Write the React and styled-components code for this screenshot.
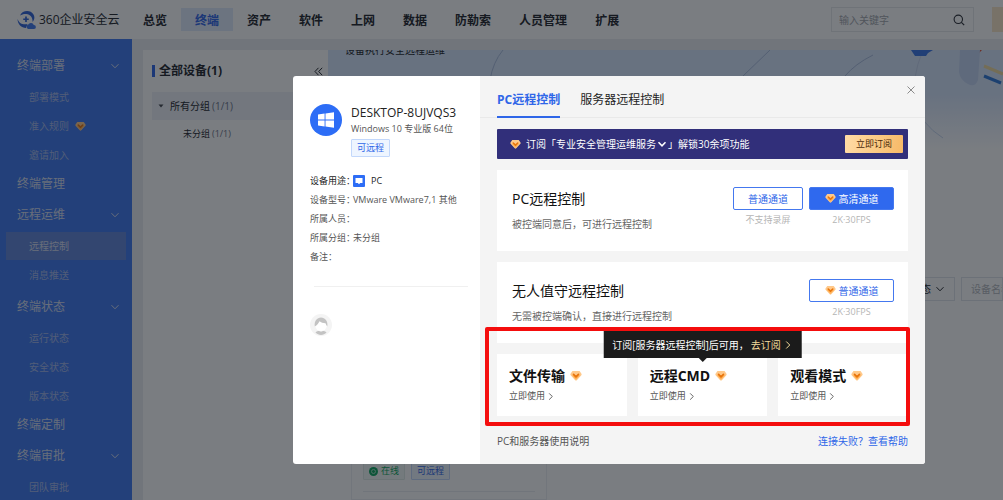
import React from "react";
import styled, { createGlobalStyle, css } from "styled-components";

const GlobalStyle = createGlobalStyle`
  *, *::before, *::after { box-sizing: border-box; }
  body {
    margin: 0;
    font-family: "Open Sans", "Noto Sans CJK SC", sans-serif;
    font-size: 10px;
    line-height: 16px;
    color: #22252b;
    background: #fff;
  }
  button, input, select { font: inherit; color: inherit; margin: 0; }
  button { cursor: pointer; white-space: nowrap; }
  a { text-decoration: none; color: inherit; }
  ul { list-style: none; margin: 0; padding: 0; }
  h2, h3, p, dl, dd, dt { margin: 0; font-weight: 400; }
  svg { display: block; flex: none; }
`;

/* ---------- icons ---------- */

const Gem = ({ size = 11 }) => (
  <svg width={size} height={size} viewBox="0 0 22 22" aria-hidden="true">
    <path d="M5.5 2h11c.7 0 1.300.300 1.700.800L21 7c.6.900.5 1.900-.2 2.700l-8.300 9c-.8.900-2.200.900-3 0l-8.300-9C.5 8.900.4 7.900 1 7l2.800-4.200C4.200 2.300 4.800 2 5.500 2z" fill="#ffc98a" />
    <path d="M3.500 9.500h15l-6.600 7.600c-.5.500-1.300.500-1.800 0z" fill="#ffb056" />
    <path d="M6.500 8l4.500 4.500L15.500 8" fill="none" stroke="#e8750c" strokeWidth="3.200" strokeLinecap="round" strokeLinejoin="round" />
  </svg>
);

const Chevron = ({ dir = "down", size = 10, width = 1 }) => (
  <svg width={size} height={size} viewBox="0 0 10 10" aria-hidden="true">
    <path
      d={dir === "down" ? "M1.500 3.200L5 6.800l3.500-3.600" : "M3.500 1.500L7 5 3.500 8.500"}
      fill="none"
      stroke="currentColor"
      strokeWidth={width}
    />
  </svg>
);

const LogoMark = () => (
  <svg width="20" height="20" viewBox="0 0 40 40" aria-hidden="true">
    <path d="M6 11C11 0 27-1 33 9c3 5 2 11-2 15 1-8-4-15-12-16-5-.6-9 1-13 3z" fill="#2f63d8" />
    <path d="M1 18c4 10 12 12 20 10l-3 8C9 36 1 28 1 18z" fill="#2f63d8" />
    <path d="M18 13v11M12.500 18.500h11" stroke="#2f63d8" strokeWidth="3.400" />
    <path d="M22 38a5 5 0 01.500-9 6 6 0 0111 1 4 4 0 01.500 8z" fill="#3f78ee" />
  </svg>
);

const SearchIcon = () => (
  <svg width="12" height="12" viewBox="0 0 12 12" aria-hidden="true">
    <circle cx="5.300" cy="5.300" r="4.200" fill="none" stroke="#2b2e35" strokeWidth="1.100" />
    <path d="M8.400 8.400l2.800 2.800" stroke="#2b2e35" strokeWidth="1.200" />
  </svg>
);

const WindowsLogo = () => (
  <svg width="32" height="32" viewBox="0 0 32 32" aria-hidden="true">
    <circle cx="16" cy="16" r="16" fill="#2d6df6" />
    <path d="M8 10.400l6.600-.9v6H8zM15.500 9.400L24 8.200v7.300h-8.500zM8 16.400h6.600v6L8 21.500zM15.500 16.400H24v7.400l-8.500-1.200z" fill="#fff" />
  </svg>
);

const PcIcon = () => (
  <svg width="12" height="12" viewBox="0 0 12 12" aria-hidden="true">
    <rect width="12" height="12" rx="1" fill="#2d6df6" />
    <path d="M2.500 3h7v5h-2.300L6 9.300 4.800 8H2.500z" fill="#fff" />
  </svg>
);

const Avatar = () => (
  <svg width="22" height="22" viewBox="0 0 22 22" role="img" aria-label="用户头像">
    <circle cx="11" cy="11" r="11" fill="#f4f4f4" />
    <circle cx="11" cy="11" r="6" fill="#fff" />
    <path d="M4.800 12.500C4 7 7 3.500 11 3.500s7.200 3.500 6.300 9c-.8-1-1.300-2-1.800-3.300-2.500 0-4.500-.6-6-1.900-1 2.200-2.500 4-4.700 5.200z" fill="#c3c3c3" />
    <path d="M5.500 18.500c1.500-1.500 3.500-2 5.500-.800 2-1.200 4-.7 5.500.800-1.500 1.600-3.500 2.500-5.500 2.500s-4-.9-5.500-2.500z" fill="#c3c3c3" />
  </svg>
);

const CloseIcon = () => (
  <svg width="8" height="8" viewBox="0 0 8 8" aria-hidden="true">
    <path d="M.5.500l7 7M7.500.500l-7 7" stroke="#8b8b8b" strokeWidth="1" />
  </svg>
);

const OnlineIcon = () => (
  <svg width="9" height="9" viewBox="0 0 9 9" aria-hidden="true">
    <circle cx="4.500" cy="4.500" r="4.500" fill="#0ea760" />
    <circle cx="4.500" cy="4.500" r="2" fill="none" stroke="#9fdcbc" strokeWidth="1" />
  </svg>
);

/* ---------- page behind the dialog ---------- */

const Page = styled.div`
  display: flex;
  flex-direction: column;
  height: 100vh;
  overflow: hidden;
  background: #ecedf1;
`;

const TopBar = styled.header`
  display: flex;
  align-items: center;
  flex: none;
  height: 39px;
  padding-left: 17px;
  background: #fff;
`;

const Brand = styled.a`
  display: flex;
  align-items: center;
  gap: 2px;
  flex: none;
  width: 112px;
  font-size: 12px;
  white-space: nowrap;
`;

const Nav = styled.nav`
  display: flex;
  justify-content: space-between;
  flex: 0 1 496px;
`;

const NavLink = styled.a`
  padding: 5px 14px 2px;
  font-size: 12px;
  font-weight: 700;
  white-space: nowrap;
  ${(p) => p.$active && css`
    color: #2f66e8;
    background: #dfeafd;
  `}
`;

const Search = styled.label`
  display: flex;
  align-items: center;
  width: 143px;
  height: 25px;
  margin-left: auto;
  padding: 0 8px 0 7px;
  border: 1px solid #e6e8ec;
  input {
    flex: 1;
    min-width: 0;
    padding: 0;
    border: 0;
    outline: 0;
    background: none;
  }
  input::placeholder { color: #a4a7ad; }
`;

const Promo = styled.button`
  width: 11px;
  height: 25px;
  margin-left: 18px;
  padding: 0;
  border: 0;
  background: #fbe6c8;
`;

const Columns = styled.div`
  display: flex;
  flex: 1;
  min-height: 0;
`;

const Sidebar = styled.nav`
  flex: none;
  width: 132px;
  padding: 9px 6px;
  background: #3f79f0;
  color: #d5dcf0;
  overflow: hidden;
`;

const Group = styled.li`
  margin-top: ${(p) => (p.$open ? 3 : 0)}px;
`;

const GroupLink = styled.a`
  display: flex;
  align-items: center;
  justify-content: space-between;
  height: 28px;
  padding: 2px 6px 0 11px;
  font-size: 12px;
`;

const SubList = styled.ul`
  display: flex;
  flex-direction: column;
  gap: 1px;
  margin-top: 4px;
`;

const SubLink = styled.a`
  display: flex;
  align-items: center;
  gap: 6px;
  height: 28px;
  padding-left: 23px;
  color: ${(p) => (p.$active ? "#d5dcf0" : "#a5b8ea")};
  background: ${(p) => (p.$active ? "#6386da" : "none")};
`;

const DevicePanel = styled.section`
  flex: none;
  width: 185px;
  margin: 11px 0 0 11px;
  padding: 12px 5px 12px 9px;
  background: #fff;
`;

const PanelHead = styled.div`
  display: flex;
  align-items: center;
  justify-content: space-between;
  height: 18px;
  h2 {
    padding-left: 4px;
    border-left: 3px solid #2f66e8;
    font-size: 12px;
    line-height: 12px;
    font-weight: 700;
  }
  button {
    display: flex;
    padding: 0;
    border: 0;
    background: none;
  }
`;

const TreeRow = styled.div`
  display: flex;
  align-items: center;
  gap: 2px;
  height: 28px;
  padding-left: ${(p) => (p.$child ? 31 : 6)}px;
  font-size: ${(p) => (p.$child ? 9 : 10)}px;
  background: ${(p) => (p.$child ? "none" : "#eff2f9")};
  span { color: #6d7488; }
  svg { margin-right: 4px; }
`;

const Tree = styled.div`
  margin-top: 12px;
`;

const Content = styled.main`
  display: flex;
  flex-direction: column;
  flex: 1;
  min-width: 0;
  margin-top: 11px;
  background: #fff;
`;

const Hero = styled.div`
  display: flex;
  justify-content: space-between;
  flex: none;
  height: 100px;
  padding-left: 17px;
  overflow: hidden;
  background: linear-gradient(#d8e6fc 45%, #fff);
  p {
    margin-top: -8px;
    white-space: nowrap;
  }
`;

const Filters = styled.div`
  display: flex;
  justify-content: flex-end;
  gap: 6px;
  padding-top: 127px;
`;

const fieldBox = css`
  height: 24px;
  border: 1px solid #e1e4ea;
  background: #fff;
`;

const StateSelect = styled.div`
  ${fieldBox}
  display: flex;
  align-items: center;
  width: 100px;
  padding-right: 9px;
  select {
    flex: 1;
    padding: 0;
    border: 0;
    appearance: none;
    background: none;
    text-align: right;
    text-align-last: right;
  }
  svg { margin-left: 4px; }
`;

const NameInput = styled.input`
  ${fieldBox}
  width: 42px;
  padding: 0 0 0 9px;
  &::placeholder { color: #b4b7bd; }
`;

const DeviceCard = styled.article`
  display: flex;
  flex-direction: column;
  justify-content: flex-end;
  width: 196px;
  height: 190px;
  margin: 10px 0 0 23px;
  padding: 0 11px 7px;
  border: 1px solid #eef0f4;
`;

const CardTags = styled.div`
  display: flex;
  gap: 6px;
  padding-bottom: 11px;
  border-bottom: 1px solid #eceef2;
`;

const Tag = styled.span`
  display: inline-flex;
  align-items: center;
  justify-content: center;
  gap: 3px;
  height: 18px;
  padding: 0 5px;
  border: 1px solid ${(p) => (p.$green ? "#e0ebe6" : "#c3d8fb")};
  border-radius: 1px;
  background: ${(p) => (p.$green ? "#f2f8f5" : "#eef5ff")};
  color: ${(p) => (p.$green ? "#0ea760" : "#2f66e8")};
  font-size: 9px;
`;

/* ---------- dialog ---------- */

const Overlay = styled.div`
  position: fixed;
  inset: 0;
  display: flex;
  align-items: flex-start;
  padding: 76px 78px 0 293px;
  background: rgba(13, 19, 26, 0.55);
`;

const Dialog = styled.div`
  position: relative;
  display: flex;
  flex: 1;
  min-width: 0;
  border-radius: 3px;
  background: #fff;
`;

const Close = styled.button`
  position: absolute;
  top: 6px;
  right: 6px;
  display: grid;
  place-items: center;
  width: 16px;
  height: 16px;
  padding: 0;
  border: 0;
  background: none;
`;

const Info = styled.aside`
  flex: none;
  width: 187px;
  padding: 27px 12px 0 17px;
  color: #555;
`;

const InfoHead = styled.div`
  display: flex;
  align-items: flex-start;
  gap: 9px;
  white-space: nowrap;
  svg { margin-top: 1px; }
  h2 {
    font-size: 12px;
    line-height: 19px;
    color: #222;
  }
  p { font-size: 9px; line-height: 14px; margin-bottom: 3px; }
`;

const Facts = styled.dl`
  margin-top: 14px;
  font-size: 9px;
  line-height: 19px;
`;

const Fact = styled.div`
  display: flex;
  align-items: center;
  height: 19px;
  white-space: nowrap;
  color: ${(p) => (p.$strong ? "#222" : "#555")};
  dt { flex: none; width: 43px; }
  dd { display: flex; align-items: center; gap: 6px; }
`;

const Divider = styled.hr`
  height: 1px;
  margin: 20px 0 27px 4px;
  border: 0;
  background: #f0f0f0;
`;

const Work = styled.section`
  flex: 1;
  min-width: 0;
  border-radius: 0 3px 3px 0;
  background: #f4f4f4;
`;

const Tabs = styled.div`
  display: flex;
  gap: 20px;
  height: 42px;
  padding: 0 17px;
  border-bottom: 1px solid #e9e9e9;
`;

const Tab = styled.button`
  height: 42px;
  padding: 8px 0 0;
  border: 0;
  border-bottom: 2px solid ${(p) => (p.$active ? "#2f66e8" : "transparent")};
  background: none;
  font-size: 12px;
  font-weight: ${(p) => (p.$active ? 700 : 400)};
  color: ${(p) => (p.$active ? "#2f66e8" : "#222")};
`;

const Body = styled.div`
  display: flex;
  flex-direction: column;
  gap: 11px;
  padding: 11px 17px 0;
`;

const Subscribe = styled.div`
  display: flex;
  align-items: center;
  height: 30px;
  padding: 0 5px 0 13px;
  border-radius: 1px;
  background: #312f7a;
  color: #fff;
  white-space: nowrap;
  p {
    display: flex;
    align-items: center;
    gap: 1px;
    margin-left: 5px;
  }
  button {
    width: 58px;
    height: 18px;
    margin-left: auto;
    padding: 0;
    border: 0;
    border-radius: 1px;
    background: linear-gradient(100deg, #ffdca6, #f7b967);
    color: #4d2b0a;
    font-size: 9px;
    line-height: 16px;
  }
`;

const ModeCard = styled.article`
  display: flex;
  justify-content: space-between;
  min-height: 81px;
  padding: 17px 14px 18px 15px;
  background: #fff;
`;

const ModeText = styled.div`
  padding-top: 2px;
  h3 { font-size: 14px; line-height: 20px; color: #111; }
  p { margin-top: 7px; color: #666; }
`;

const Channels = styled.div`
  display: flex;
  gap: 6px;
`;

const Channel = styled.div`
  display: flex;
  flex-direction: column;
  gap: 4px;
  text-align: center;
  color: #b5b5b5;
  font-size: 9px;
  line-height: 12px;
  white-space: nowrap;
`;

const ChannelButton = styled.button`
  display: flex;
  align-items: center;
  justify-content: center;
  gap: 3px;
  width: ${(p) => (p.$wide ? 85 : 70)}px;
  height: 23px;
  padding: 0;
  border: 1px solid #4478ef;
  border-radius: 2px;
  background: ${(p) => (p.$primary ? "#2f69ee" : "#fff")};
  color: ${(p) => (p.$primary ? "#fff" : "#2f66e8")};
  font-size: 10px;
`;

const Features = styled.div`
  position: relative;
  display: grid;
  grid-template-columns: repeat(3, 1fr);
  gap: 11px;
`;

const Feature = styled.article`
  padding: 12px;
  background: #fff;
  h3 {
    display: flex;
    align-items: center;
    gap: 5px;
    font-size: 14px;
    line-height: 20px;
    font-weight: 700;
    color: #111;
    white-space: nowrap;
  }
  > a {
    display: flex;
    align-items: center;
    gap: 1px;
    margin-top: 2px;
    font-size: 9px;
    color: #555;
  }
`;

const Highlight = styled.div`
  position: absolute;
  inset: -27px -2px -10px -12px;
  border: 4px solid #f40d0d;
  border-radius: 2px;
  pointer-events: none;
`;

const Tooltip = styled.div`
  position: absolute;
  z-index: 1;
  top: -23px;
  left: 50%;
  display: flex;
  align-items: center;
  gap: 2px;
  height: 27px;
  padding: 0 9px;
  transform: translateX(-50%);
  background: #1b1b1b;
  color: #fff;
  white-space: nowrap;
  a {
    display: flex;
    align-items: center;
    gap: 2px;
    color: #f5dc9b;
  }
  &::after {
    content: "";
    position: absolute;
    top: 100%;
    left: 50%;
    margin-left: -4px;
    border: 4px solid transparent;
    border-top-color: #1b1b1b;
    border-bottom: 0;
  }
`;

const Footer = styled.footer`
  display: flex;
  justify-content: space-between;
  padding: 17px 17px 15px;
  color: #555;
  a:last-child { color: #2f66e8; }
`;

/* ---------- data ---------- */

const NAV = ["总览", "终端", "资产", "软件", "上网", "数据", "防勒索", "人员管理", "扩展"];

const MENU = [
  { name: "终端部署", items: ["部署模式", "准入规则", "邀请加入"] },
  { name: "终端管理" },
  { name: "远程运维", items: ["远程控制", "消息推送"] },
  { name: "终端状态", items: ["运行状态", "安全状态", "版本状态"] },
  { name: "终端定制" },
  { name: "终端审批", items: ["团队审批"] },
];

const FACTS = [
  ["设备型号", "VMware VMware7,1 其他"],
  ["所属人员", ""],
  ["所属分组", "未分组"],
  ["备注", ""],
];

const FEATURES = ["文件传输", "远程CMD", "观看模式"];

const HeroArt = () => (
  <svg width="558" height="100" viewBox="2 0 558 100" aria-hidden="true">
    <path d="M60 0Q50 12 47 30M327 0L300 26M430 5Q412 14 402 26" fill="none" stroke="#a9bddf" />
    <path d="M480 0Q455 60 500 88" fill="none" stroke="#c6d5ef" />
    <path d="M468 0h22l-5 3-2 3h-11z" fill="#3a76e6" />
    <path d="M529 0h10l-3 3z" fill="#e0563c" />
    <path d="M517 0h20l-2 30q-3 8-10 4-8-4-9-12z" fill="#c3d5f4" />
    <path d="M541 16l19 8" stroke="#f1dc9f" strokeWidth="3" />
    <path d="M541 26l17 7" stroke="#2f78d8" strokeWidth="3" />
  </svg>
);

export default function App() {
  return (
    <>
      <GlobalStyle />
      <Page>
        <TopBar>
          <Brand href="#"><LogoMark />360企业安全云</Brand>
          <Nav>
            {NAV.map((n) => <NavLink key={n} href="#" $active={n === "终端"}>{n}</NavLink>)}
          </Nav>
          <Search>
            <input type="text" placeholder="输入关键字" aria-label="输入关键字" />
            <SearchIcon />
          </Search>
          <Promo aria-label="升级" />
        </TopBar>
        <Columns>
          <Sidebar>
            <ul>
              {MENU.map((g) => (
                <Group key={g.name} $open={!!g.items}>
                  <GroupLink href="#">{g.name}{g.items && <Chevron />}</GroupLink>
                  {g.items && (
                    <SubList>
                      {g.items.map((s) => (
                        <li key={s}>
                          <SubLink href="#" $active={s === "远程控制"}>
                            {s}{s === "准入规则" && <Gem />}
                          </SubLink>
                        </li>
                      ))}
                    </SubList>
                  )}
                </Group>
              ))}
            </ul>
          </Sidebar>
          <DevicePanel>
            <PanelHead>
              <h2>全部设备(1)</h2>
              <button aria-label="收起">
                <svg width="9" height="9" viewBox="0 0 9 9" aria-hidden="true">
                  <path d="M4.500.800L1 4.500l3.500 3.700M8.200.800L4.700 4.500l3.500 3.700" fill="none" stroke="#22252b" />
                </svg>
              </button>
            </PanelHead>
            <Tree>
              <TreeRow>
                <svg width="6" height="4" viewBox="0 0 6 4" aria-hidden="true"><path d="M.5.500h5L3 3.500z" fill="#44474f" /></svg>
                所有分组 <span>(1/1)</span>
              </TreeRow>
              <TreeRow $child>未分组 <span>(1/1)</span></TreeRow>
            </Tree>
          </DevicePanel>
          <Content>
            <Hero><p>设备执行安全远程运维</p><HeroArt /></Hero>
            <Filters>
              <StateSelect>
                <select aria-label="状态"><option>状态</option></select>
                <Chevron />
              </StateSelect>
              <NameInput placeholder="设备名称" aria-label="设备名称" />
            </Filters>
            <DeviceCard>
              <CardTags>
                <Tag $green><OnlineIcon />在线</Tag>
                <Tag>可远程</Tag>
              </CardTags>
            </DeviceCard>
          </Content>
        </Columns>
      </Page>

      <Overlay>
        <Dialog role="dialog" aria-label="远程控制">
          <Info>
            <InfoHead>
              <WindowsLogo />
              <div>
                <h2>DESKTOP-8UJVQS3</h2>
                <p>Windows 10 专业版 64位</p>
                <Tag>可远程</Tag>
              </div>
            </InfoHead>
            <Facts>
              <Fact $strong><dt>设备用途：</dt><dd><PcIcon />PC</dd></Fact>
              {FACTS.map(([k, v]) => <Fact key={k}><dt>{k}：</dt><dd>{v}</dd></Fact>)}
            </Facts>
            <Divider />
            <Avatar />
          </Info>
          <Work>
            <Tabs role="tablist">
              <Tab role="tab" aria-selected="true" $active>PC远程控制</Tab>
              <Tab role="tab" aria-selected="false">服务器远程控制</Tab>
            </Tabs>
            <Body>
              <Subscribe>
                <Gem />
                <p>订阅「专业安全管理运维服务<Chevron width={1.500} />」解锁30余项功能</p>
                <button>立即订阅</button>
              </Subscribe>
              <ModeCard>
                <ModeText>
                  <h3>PC远程控制</h3>
                  <p>被控端同意后，可进行远程控制</p>
                </ModeText>
                <Channels>
                  <Channel><ChannelButton>普通通道</ChannelButton>不支持录屏</Channel>
                  <Channel><ChannelButton $wide $primary><Gem />高清通道</ChannelButton>2K·30FPS</Channel>
                </Channels>
              </ModeCard>
              <ModeCard>
                <ModeText>
                  <h3>无人值守远程控制</h3>
                  <p>无需被控端确认，直接进行远程控制</p>
                </ModeText>
                <Channels>
                  <Channel><ChannelButton $wide><Gem />普通通道</ChannelButton>2K·30FPS</Channel>
                </Channels>
              </ModeCard>
              <Features>
                {FEATURES.map((f) => (
                  <Feature key={f}>
                    <h3>{f}<Gem size={12} /></h3>
                    <a href="#">立即使用<Chevron dir="right" size={9} /></a>
                  </Feature>
                ))}
                <Highlight />
                <Tooltip role="tooltip">
                  订阅[服务器远程控制]后可用，
                  <a href="#">去订阅<Chevron dir="right" /></a>
                </Tooltip>
              </Features>
            </Body>
            <Footer>
              <a href="#">PC和服务器使用说明</a>
              <a href="#">连接失败？查看帮助</a>
            </Footer>
          </Work>
          <Close aria-label="关闭"><CloseIcon /></Close>
        </Dialog>
      </Overlay>
    </>
  );
}
